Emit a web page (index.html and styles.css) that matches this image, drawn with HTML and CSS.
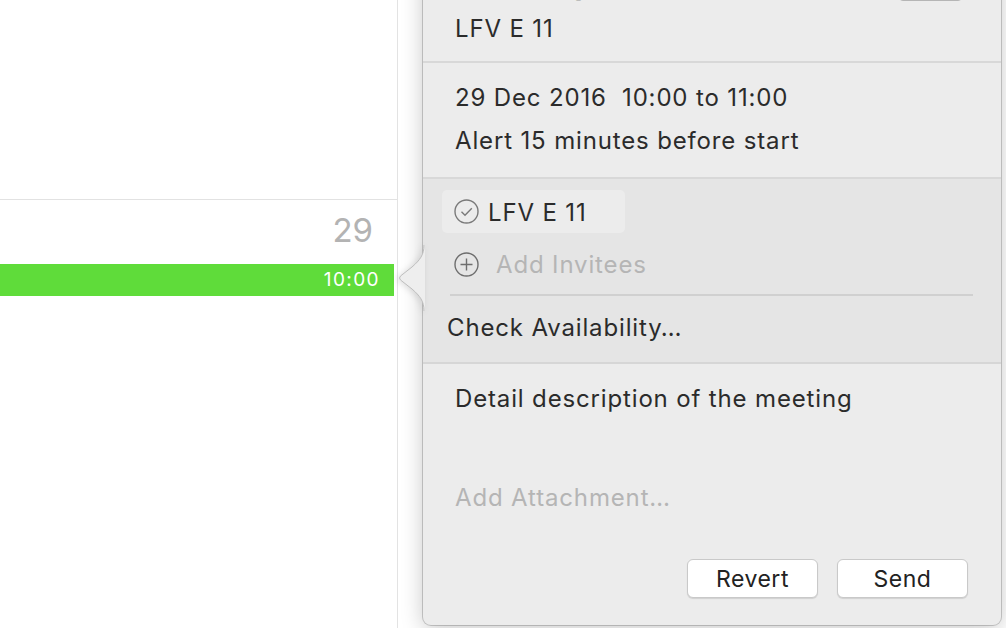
FILE: index.html
```html
<!DOCTYPE html>
<html lang="en">
<head>
    <meta charset="UTF-8">
    <title>Calendar event</title>
    <link rel="stylesheet" href="styles.css">
</head>
<body>
    <div class="calendar">
        <div class="day-col">
            <div class="cell cell-top"></div>
            <div class="cell cell-day">
                <div class="day-num">29</div>
                <div class="event"><span>10:00</span></div>
            </div>
        </div>
        <div class="day-col day-rest"></div>
    </div>

    <div class="popover">
        <svg class="arrow" width="27" height="66" viewBox="0 0 27 66">
            <path d="M26 0 C26 10 22 15 14 22 L2.5 31 Q0.5 33 2.5 35 L14 44 C22 51 26 56 26 66 L27 66 L27 0 Z" fill="#eeeeee"/>
            <path d="M26 0 C26 10 22 15 14 22 L2.5 31 Q0.5 33 2.5 35 L14 44 C22 51 26 56 26 66" fill="none" stroke="#bdbdbd" stroke-width="1"/>
        </svg>

        <!-- title + location -->
        <div class="pop-head">
            <div class="title-row">
                <span class="title">Meeting</span>
                <span class="color-btn"></span>
            </div>
            <div class="line">LFV E 11</div>
        </div>

        <!-- date / alert -->
        <div class="pop-when">
            <div class="line">29 Dec 2016&nbsp; 10:00 to 11:00</div>
            <div class="line alert">Alert 15 minutes before start</div>
        </div>

        <!-- invitees -->
        <div class="pop-invitees">
            <div class="token">
                <svg class="icon" width="25" height="25" viewBox="0 0 25 25">
                    <circle cx="12.5" cy="12.5" r="11.5" fill="none" stroke="#7a7a7a" stroke-width="1.4"/>
                    <path d="M7.5 12.8 L11 16.3 L17.8 9.2" fill="none" stroke="#7a7a7a" stroke-width="1.4"/>
                </svg>
                <span class="line">LFV E 11</span>
            </div>
            <div class="add-row">
                <svg class="icon" width="25" height="25" viewBox="0 0 25 25">
                    <circle cx="12.5" cy="12.5" r="11.5" fill="none" stroke="#6e6e6e" stroke-width="1.4"/>
                    <path d="M12.5 6.5 V18.5 M6.5 12.5 H18.5" fill="none" stroke="#6e6e6e" stroke-width="1.4"/>
                </svg>
                <span class="line muted">Add Invitees</span>
            </div>
            <div class="rule"></div>
            <div class="line check">Check Availability…</div>
        </div>

        <!-- notes -->
        <div class="pop-notes">
            <div class="line">Detail description of the meeting</div>
            <div class="line muted attach">Add Attachment…</div>
            <div class="actions">
                <button class="btn">Revert</button>
                <button class="btn">Send</button>
            </div>
        </div>
    </div>
</body>
</html>
```

FILE: styles.css
```css
* {
    box-sizing: border-box;
    margin: 0;
    padding: 0;
}
body {
    width: 1006px;
    height: 628px;
    overflow: hidden;
    background: #fff;
    font-family: Inter, "Liberation Sans", sans-serif;
    color: #2b2b2b;
    position: relative;
}
.calendar {
    display: flex;
    height: 628px;
}
.day-col {
    width: 398px;
    border-right: 1px solid #e3e3e3;
}
.day-rest {
    flex: 1;
    border-right: none;
}
.cell-top {
    height: 200px;
    border-bottom: 1px solid #e2e2e2;
}
.day-num {
    font-size: 33px;
    line-height: 40px;
    color: #b3b3b3;
    text-align: right;
    padding: 10px 24px 0 0;
}
.event {
    margin: 14px 3px 0 0;
    height: 32px;
    background: #5fdc3a;
    color: #fff;
    font-size: 19px;
    line-height: 32px;
    letter-spacing: 1.4px;
    text-align: right;
    padding-right: 14px;
}

/* popover */
.popover {
    position: absolute;
    left: 423px;
    top: -50px;
    width: 578px;
    height: 675px;
    background: #ececec;
    border-radius: 8px;
    box-shadow: 0 0 0 1px rgba(0, 0, 0, 0.18), 0 4px 22px rgba(0, 0, 0, 0.22);
    display: flex;
    flex-direction: column;
}
.arrow {
    position: absolute;
    left: -25px;
    top: 295px;
    filter: drop-shadow(-2px 1px 3px rgba(0, 0, 0, 0.12));
}
.line {
    font-size: 24px;
    line-height: 30px;
    letter-spacing: 0.85px;
    white-space: nowrap;
}
.muted {
    color: #b5b5b5;
}
.pop-head {
    padding: 0 32px 17px;
    border-bottom: 2px solid #d8d8d8;
}
.title-row {
    height: 51px;
    display: flex;
    align-items: flex-end;
    justify-content: space-between;
}
.title {
    font-size: 34px;
    line-height: 40px;
    font-weight: 600;
    color: #2e2e2e;
}
.color-btn {
    width: 65px;
    height: 24px;
    margin-right: 6px;
    background: #fff;
    border: 1px solid #b5b5b5;
    border-radius: 5px;
}
.pop-head .line {
    margin-top: 13px;
}
.pop-when {
    padding: 20px 32px 21px;
    border-bottom: 2px solid #d8d8d8;
}
.alert {
    margin-top: 13px;
}
.pop-invitees {
    background: #e5e5e5;
    padding: 11px 28px 19px 19px;
    border-bottom: 2px solid #d6d6d6;
}
.token {
    width: 183px;
    height: 43px;
    background: #ececec;
    border-radius: 5px;
    display: flex;
    align-items: center;
    gap: 9px;
    padding: 2px 0 0 12px;
}
.token .icon {
    margin-top: -2px;
}
.add-row {
    display: flex;
    align-items: center;
    gap: 17px;
    height: 49px;
    margin-top: 7px;
    padding-left: 12px;
}
.rule {
    height: 2px;
    background: #d0d0d0;
    margin: 5px 0 0 8px;
}
.check {
    margin: 17px 0 0 5px;
}
.pop-notes {
    flex: 1;
    display: flex;
    flex-direction: column;
    padding: 20px 33px 27px 32px;
}
.attach {
    margin-top: 69px;
}
.actions {
    margin-top: auto;
    display: flex;
    justify-content: flex-end;
    gap: 19px;
}
.btn {
    width: 131px;
    height: 39px;
    background: #fff;
    border: 1px solid #c9c9c9;
    border-radius: 6px;
    box-shadow: 0 1px 1px rgba(0, 0, 0, 0.12);
    font-family: Inter, "Liberation Sans", sans-serif;
    font-size: 23px;
    letter-spacing: 0.5px;
    color: #222;
}
```
